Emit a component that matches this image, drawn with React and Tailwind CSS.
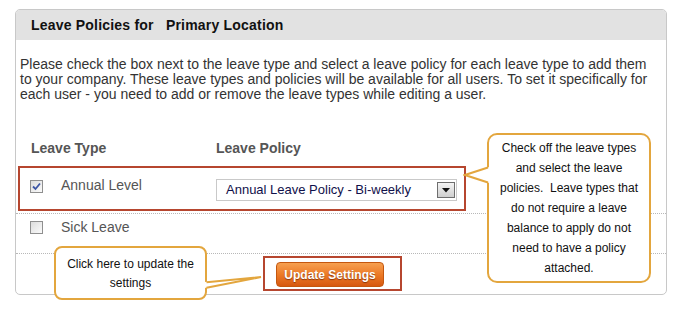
import React from "react";

function Checkbox({ checked }) {
  return (
    <span className="flex h-[13px] w-[13px] items-center justify-center border border-[#8f8f8f] bg-gradient-to-br from-[#dcdcdc] to-[#fbfbfb]">
      {checked && (
        <svg width="9" height="9" viewBox="0 0 9 9">
          <path d="M1 4.5 L3.5 7 L8 1.5" fill="none" stroke="#3c55a5" strokeWidth="1.8" />
        </svg>
      )}
    </span>
  );
}

function PolicySelect() {
  return (
    <div className="mt-[13px] flex h-[22px] w-[241px] items-center justify-between border border-[#c9c9c9] bg-white pl-[9px] pr-[1px]">
      <span className="text-[13px] leading-[16px] text-[#10104a]">Annual Leave Policy - Bi-weekly</span>
      <span className="flex h-[16px] w-[18px] items-center justify-center border border-[#6e6e6e] bg-gradient-to-b from-[#f4f4f4] to-[#cfcfcf]">
        <svg width="8" height="5" viewBox="0 0 8 5">
          <path d="M0 0 H8 L4 4.5 Z" fill="#111" />
        </svg>
      </span>
    </div>
  );
}

export default function App() {
  return (
    <div className="relative h-[318px] w-[675px] overflow-hidden bg-white font-['Liberation_Sans',Arial,sans-serif]">
      <div className="pl-[15px] pt-[9px]">
        <div className="w-[652px] rounded-[5px] border border-[#c8c8c8]">
          {/* header */}
          <div className="flex h-[30px] items-center rounded-t-[4px] bg-[#e2e2e2] pl-[15px]">
            <span className="whitespace-pre text-[14px] font-bold tracking-[0.2px] text-[#111]">Leave Policies for   Primary Location</span>
          </div>

          {/* intro */}
          <p className="px-[4px] pt-[17px] text-[14px] leading-[15px] text-[#333]">
            Please check the box next to the leave type and select a leave policy for each leave type to add them
            to your company. These leave types and policies will be available for all users. To set it specifically for
            each user - you need to add or remove the leave types while editing a user.
          </p>

          {/* column heads */}
          <div className="mb-[8px] mt-[36px] flex h-[20px] items-center pl-[15px] text-[14px] font-bold text-[#555]">
            <span className="w-[185px]">Leave Type</span>
            <span>Leave Policy</span>
          </div>

          {/* rows */}
          <div className="flex h-[48px] items-start border-b border-dotted border-[#b8b8b8] pl-[14px] pt-[8px]">
            <div className="flex w-[186px] items-start">
              <div className="mt-[6px]">
                <Checkbox checked />
              </div>
              <span className="ml-[18px] mt-[3px] text-[14px] leading-[16px] text-[#555]">Annual Level</span>
            </div>
            <div className="-mt-[8px]">
              <PolicySelect />
            </div>
          </div>
          <div className="flex h-[40px] items-start border-b border-dotted border-[#b8b8b8] pl-[14px]">
            <div className="mt-[7px]">
              <Checkbox />
            </div>
            <span className="ml-[18px] mt-[5px] text-[14px] leading-[16px] text-[#555]">Sick Leave</span>
          </div>

          {/* footer */}
          <div className="flex h-[40px] items-start pl-[260px] pt-[8px]">
            <button className="h-[25px] w-[108px] rounded-[4px] border border-[#c4570f] bg-gradient-to-b from-[#f6a050] via-[#ec7a26] to-[#d7580f] text-[12px] font-bold text-white [text-shadow:0_1px_1px_rgba(80,20,0,0.6)]">
              Update Settings
            </button>
          </div>
        </div>
      </div>

      {/* annotation: red highlight boxes */}
      <div className="absolute left-[18px] top-[166px] h-[45px] w-[448px] border-2 border-[#b6462f]" />
      <div className="absolute left-[263px] top-[256px] h-[35px] w-[139px] border-2 border-[#b6462f]" />

      {/* annotation: right callout */}
      <div className="absolute left-[487px] top-[133px] h-[150px] w-[164px] rounded-[10px] border-2 border-[#e3a63e] bg-white pt-[3px] text-center text-[12px] leading-[20px] text-[#111]">
        Check off the leave types
        <br />
        and select the leave
        <br />
        policies.&nbsp; Leave types that
        <br />
        do not require a leave
        <br />
        balance to apply do not
        <br />
        need to have a policy
        <br />
        attached.
      </div>
      <svg className="absolute left-[463px] top-[165px]" width="27" height="20" viewBox="0 0 27 20">
        <polygon points="2,10 26.5,2 26.5,18" fill="white" />
        <polyline points="25,2.5 2,10 25,17.5" fill="none" stroke="#e3a63e" strokeWidth="2" />
      </svg>

      {/* annotation: bottom callout */}
      <div className="absolute left-[54px] top-[246px] h-[54px] w-[153px] rounded-[8px] border-2 border-[#e3a63e] bg-white pt-[7px] text-center text-[12px] leading-[19px] text-[#111]">
        Click here to update the
        <br />
        settings
      </div>
      <svg className="absolute left-[204px] top-[274px]" width="58" height="16" viewBox="0 0 58 16">
        <polygon points="0.5,8 57,3 0.5,14" fill="white" />
        <polyline points="2.5,8.2 57,3 2.5,13.8" fill="none" stroke="#e3a63e" strokeWidth="2" />
      </svg>
    </div>
  );
}
